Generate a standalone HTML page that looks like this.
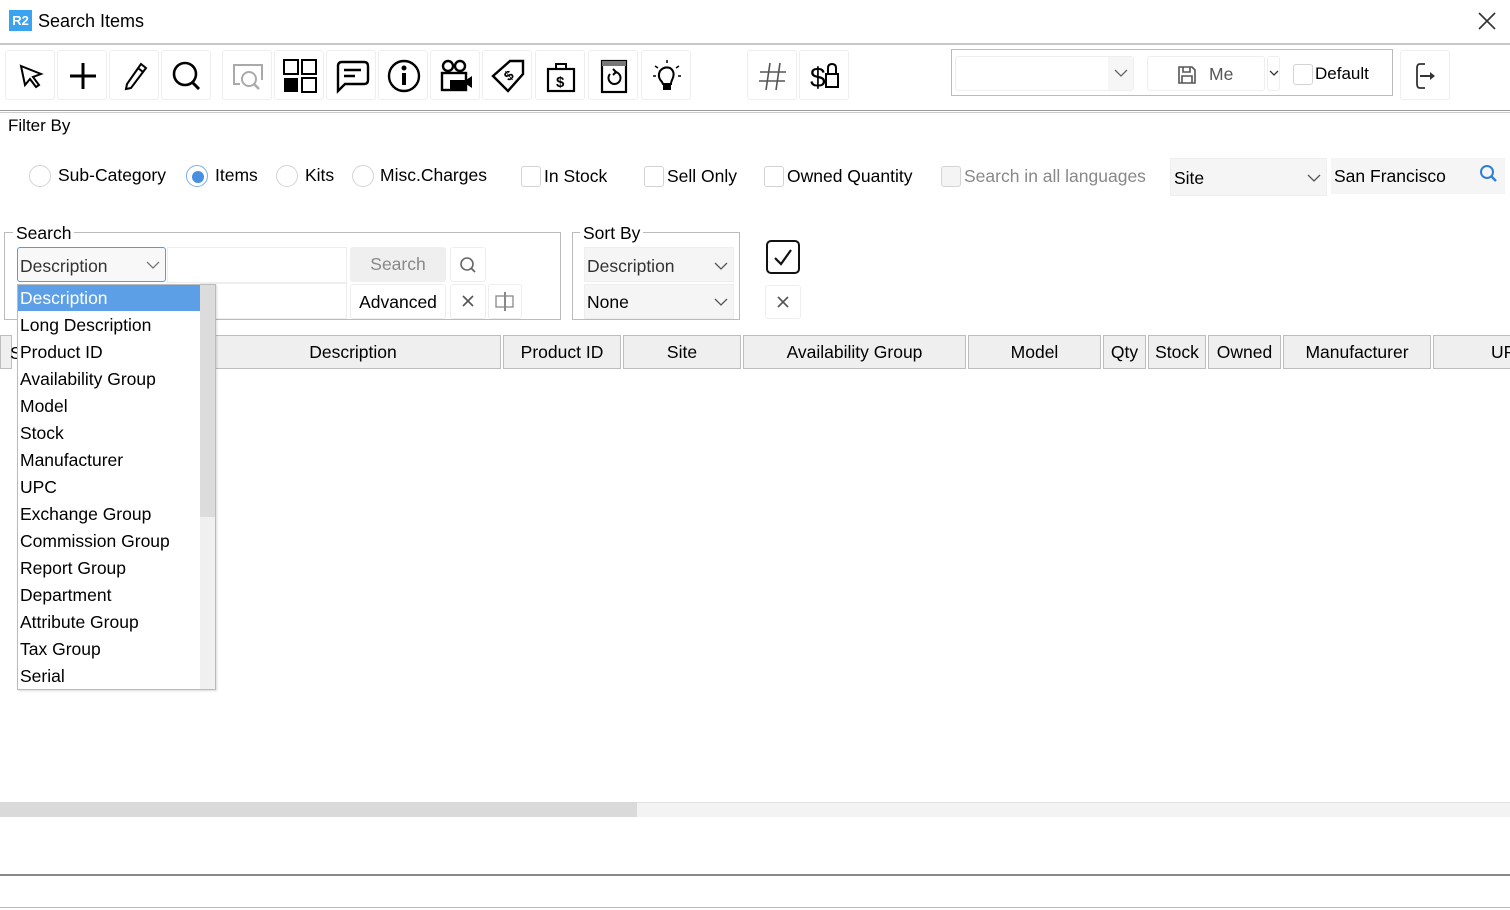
<!DOCTYPE html>
<html><head><meta charset="utf-8">
<style>
*{box-sizing:border-box;margin:0;padding:0}
body{width:1510px;height:910px;position:relative;background:#fff;font-family:"Liberation Sans",sans-serif;font-size:17.5px;color:#000;overflow:hidden}
.a{position:absolute}
.tb{position:absolute;top:50px;width:50px;height:50px;border:1px solid #eee;border-radius:3px;background:#fff}
.tb svg{position:absolute;left:7px;top:7px;width:36px;height:36px}
.rad{position:absolute;width:22px;height:22px;border:1.5px solid #d4d4d4;border-radius:50%;background:#fff}
.chk{position:absolute;width:20px;height:21px;border:1.5px solid #d4d4d4;border-radius:3px;background:#fff}
.hd{position:absolute;top:335px;height:34px;background:#efefef;border:1px solid #bdbdbd;text-align:center;line-height:33px}
.it{position:absolute;left:20px;height:27px;line-height:27px}
.btn{position:absolute;border:1px solid #eee;border-radius:3px;background:#fff}
</style></head><body>
<!-- title -->
<div class="a" style="left:9px;top:10px;width:23px;height:21px;background:#3aa3f0;color:#fff;font-size:13px;font-weight:bold;text-align:center;line-height:21px">R2</div>
<div class="a" style="left:38px;top:11px;font-size:18px">Search Items</div>
<svg class="a" style="left:1478px;top:12px" width="18" height="18"><path d="M1 1L17 17M17 1L1 17" stroke="#333" stroke-width="1.6"/></svg>
<div class="a" style="left:0;top:43px;width:1510px;height:2px;background:#c8c8c8"></div>
<!-- toolbar -->
<div class="tb" style="left:5px"><svg viewBox="0 0 36 36"><path d="M8 8L28 16L20 19L26 27L23 29L17 21L12 27Z" fill="none" stroke="#000" stroke-width="2"/></svg></div>
<div class="tb" style="left:57px"><svg viewBox="0 0 36 36"><path d="M18 5V31M5 18H31" stroke="#000" stroke-width="3"/></svg></div>
<div class="tb" style="left:109px"><svg viewBox="0 0 36 36"><path d="M24 6L29 10L14 30L9 31L10 26Z M21 10L26 14" fill="none" stroke="#000" stroke-width="2"/></svg></div>
<div class="tb" style="left:161px"><svg viewBox="0 0 36 36"><circle cx="16" cy="16" r="11" fill="none" stroke="#000" stroke-width="2.6"/><path d="M23 24L30 31" stroke="#000" stroke-width="3"/></svg></div>
<div class="tb" style="left:222px"><svg viewBox="0 0 36 36"><path d="M10 26H4V7H32V22" fill="none" stroke="#aaa" stroke-width="2"/><circle cx="19" cy="21" r="7" fill="#fff" stroke="#aaa" stroke-width="2"/><path d="M24 26L29 31" stroke="#aaa" stroke-width="2.5"/></svg></div>
<div class="tb" style="left:274px"><svg viewBox="0 0 36 36"><rect x="2" y="2" width="14" height="14" fill="none" stroke="#000" stroke-width="2"/><rect x="20" y="2" width="14" height="14" fill="none" stroke="#000" stroke-width="2"/><rect x="2" y="20" width="14" height="14" fill="#000"/><rect x="20" y="20" width="14" height="14" fill="none" stroke="#000" stroke-width="2"/></svg></div>
<div class="tb" style="left:326px"><svg viewBox="0 0 36 36"><path d="M4 8Q4 4 8 4H30Q34 4 34 8V22Q34 26 30 26H11L4 33Z" fill="none" stroke="#000" stroke-width="2.4"/><path d="M10 12H27M10 18H21" stroke="#000" stroke-width="2.4"/></svg></div>
<div class="tb" style="left:378px"><svg viewBox="0 0 36 36"><circle cx="18" cy="18" r="15" fill="none" stroke="#000" stroke-width="2.4"/><circle cx="18" cy="10" r="2.5"/><path d="M18 15V27" stroke="#000" stroke-width="4"/></svg></div>
<div class="tb" style="left:430px"><svg viewBox="0 0 36 36"><circle cx="10" cy="8" r="5" fill="none" stroke="#000" stroke-width="2.4"/><circle cx="22" cy="8" r="5" fill="none" stroke="#000" stroke-width="2.4"/><rect x="4" y="15" width="24" height="17" fill="none" stroke="#000" stroke-width="2.4"/><rect x="12" y="22" width="16" height="10"/><path d="M28 22L34 18V30L28 26" fill="#000"/></svg></div>
<div class="tb" style="left:482px"><svg viewBox="0 0 36 36"><path d="M3 18L20 3H33V16L18 33Z" fill="none" stroke="#000" stroke-width="2.4"/><text x="15" y="23" font-size="14" font-family="Liberation Sans" font-weight="bold" transform="rotate(-40 18 18)">$</text></svg></div>
<div class="tb" style="left:535px"><svg viewBox="0 0 36 36"><rect x="5" y="11" width="26" height="22" fill="none" stroke="#000" stroke-width="2.2"/><path d="M13 11V6H23V11" fill="none" stroke="#000" stroke-width="2"/><text x="13" y="29" font-size="15" font-family="Liberation Sans" font-weight="bold">$</text></svg></div>
<div class="tb" style="left:588px"><svg viewBox="0 0 36 36"><rect x="6" y="3" width="24" height="31" fill="none" stroke="#000" stroke-width="2.2"/><rect x="6" y="3" width="24" height="5" fill="#777"/><path d="M14 16A6 6 0 1 0 19 14" fill="none" stroke="#000" stroke-width="2"/><path d="M17 11L20 14L17 17" fill="none" stroke="#000" stroke-width="2"/></svg></div>
<div class="tb" style="left:641px"><svg viewBox="0 0 36 36"><path d="M13 24Q8 19 11 13Q15 8 21 10Q27 14 23 22Q22 24 22 26H14Z" fill="none" stroke="#000" stroke-width="2"/><rect x="14" y="27" width="8" height="5"/><path d="M18 2V5M6 8L9 10M30 8L27 10M4 18H7M29 18H32" stroke="#000" stroke-width="1.5"/></svg></div>
<div class="tb" style="left:747px"><svg viewBox="0 0 36 36"><path d="M15 5L11 32M25 5L21 32M5 14H31M4 23H30" stroke="#555" stroke-width="1.6"/></svg></div>
<div class="tb" style="left:799px"><svg viewBox="0 0 36 36"><text x="3" y="29" font-size="28" font-family="Liberation Sans">$</text><path d="M21 16V10Q21 6 25 6Q29 6 29 10V16" fill="none" stroke="#000" stroke-width="2"/><rect x="19" y="16" width="12" height="13" fill="#fff" stroke="#000" stroke-width="2"/></svg></div>
<!-- right toolbar group -->
<div class="a" style="left:951px;top:49px;width:442px;height:47px;border:1px solid #bbb"></div>
<div class="a" style="left:955px;top:56px;width:179px;height:35px;border:1px solid #eee;border-radius:3px;background:#fff"></div>
<div class="a" style="left:1108px;top:57px;width:25px;height:33px;background:#f6f6f6"></div>
<svg class="a" style="left:1114px;top:68px" width="14" height="10"><path d="M1 2L7 8L13 2" fill="none" stroke="#666" stroke-width="1.3"/></svg>
<div class="btn" style="left:1147px;top:56px;width:118px;height:35px"></div>
<svg class="a" style="left:1177px;top:65px" width="20" height="20"><path d="M2 2H15L18 5V18H2Z M6 2V7H13V2 M5 18V11H15V18" fill="none" stroke="#555" stroke-width="1.6"/></svg>
<div class="a" style="left:1209px;top:64px;color:#555">Me</div>
<div class="btn" style="left:1267px;top:56px;width:13px;height:35px"></div>
<svg class="a" style="left:1269px;top:70px" width="10" height="7"><path d="M1 1L5 5L9 1" fill="none" stroke="#333" stroke-width="1.3"/></svg>
<div class="chk" style="left:1293px;top:64px"></div>
<div class="a" style="left:1315px;top:64px;font-size:17px">Default</div>
<div class="tb" style="left:1400px"><svg viewBox="0 0 36 36"><path d="M17 6H12Q9 6 9 10V26Q9 30 12 30H17" fill="none" stroke="#333" stroke-width="1.8"/><path d="M12 18H24" stroke="#333" stroke-width="2"/><path d="M22 14L27 18L22 22Z" fill="#333"/></svg></div>
<div class="a" style="left:0;top:110px;width:1510px;height:1px;background:#999"></div>
<div class="a" style="left:0;top:112px;width:1510px;height:1px;background:#ccc"></div>
<div class="a" style="left:8px;top:116px;font-size:17px">Filter By</div>
<!-- filter row -->
<div class="rad" style="left:29px;top:165px"></div><div class="a" style="left:58px;top:165px">Sub-Category</div>
<div class="rad" style="left:186px;top:165px;border-color:#7ab0e8"></div><div class="a" style="left:192px;top:171px;width:12px;height:12px;border-radius:50%;background:#4a90e2"></div><div class="a" style="left:215px;top:165px">Items</div>
<div class="rad" style="left:276px;top:165px"></div><div class="a" style="left:305px;top:165px">Kits</div>
<div class="rad" style="left:352px;top:165px"></div><div class="a" style="left:380px;top:165px">Misc.Charges</div>
<div class="chk" style="left:521px;top:166px"></div><div class="a" style="left:544px;top:166px">In Stock</div>
<div class="chk" style="left:644px;top:166px"></div><div class="a" style="left:667px;top:166px">Sell Only</div>
<div class="chk" style="left:764px;top:166px"></div><div class="a" style="left:787px;top:166px">Owned Quantity</div>
<div class="chk" style="left:941px;top:166px;background:#f4f4f4"></div><div class="a" style="left:964px;top:166px;color:#888">Search in all languages</div>
<div class="a" style="left:1170px;top:158px;width:157px;height:38px;background:#f5f5f5;border:1px solid #eee"></div>
<div class="a" style="left:1174px;top:168px">Site</div>
<svg class="a" style="left:1307px;top:173px" width="14" height="10"><path d="M1 2L7 8L13 2" fill="none" stroke="#555" stroke-width="1.3"/></svg>
<div class="a" style="left:1331px;top:158px;width:174px;height:36px;background:#f5f5f5"></div>
<div class="a" style="left:1334px;top:166px">San Francisco</div>
<svg class="a" style="left:1479px;top:164px" width="20" height="20"><circle cx="8" cy="8" r="6" fill="none" stroke="#2f7fd8" stroke-width="2"/><path d="M12 12L17 17" stroke="#2f7fd8" stroke-width="2.4"/></svg>
<!-- search group -->
<div class="a" style="left:4px;top:232px;width:557px;height:88px;border:1px solid #bbb"></div>
<div class="a" style="left:13px;top:223px;background:#fff;padding:0 3px">Search</div>
<div class="a" style="left:17px;top:247px;width:149px;height:35px;border:1.5px solid #5b9bdc;border-radius:3px;background:#f8f8f8"></div>
<div class="a" style="left:20px;top:256px;color:#333">Description</div>
<svg class="a" style="left:146px;top:260px" width="14" height="10"><path d="M1 2L7 8L13 2" fill="none" stroke="#777" stroke-width="1.3"/></svg>
<div class="a" style="left:167px;top:247px;width:180px;height:36px;border:1px solid #eee"></div>
<div class="a" style="left:200px;top:283px;width:147px;height:36px;border:1px solid #eee"></div>
<div class="a" style="left:350px;top:247px;width:96px;height:35px;background:#efefef;border-radius:3px;text-align:center;line-height:35px;color:#888">Search</div>
<div class="btn" style="left:450px;top:247px;width:36px;height:35px"></div>
<svg class="a" style="left:459px;top:256px" width="20" height="20"><circle cx="8" cy="8" r="6" fill="none" stroke="#666" stroke-width="1.6"/><path d="M12 12L16 16" stroke="#666" stroke-width="1.8"/></svg>
<div class="btn" style="left:350px;top:284px;width:96px;height:35px;text-align:center;line-height:34px">Advanced</div>
<div class="btn" style="left:450px;top:284px;width:36px;height:35px"></div>
<svg class="a" style="left:462px;top:295px" width="12" height="12"><path d="M1 1L11 11M11 1L1 11" stroke="#555" stroke-width="1.6"/></svg>
<div class="btn" style="left:488px;top:284px;width:34px;height:35px"></div>
<svg class="a" style="left:494px;top:290px" width="22" height="22"><rect x="2" y="6" width="17" height="11" fill="none" stroke="#888" stroke-width="1.3"/><path d="M11 2V21" stroke="#888" stroke-width="2"/></svg>
<!-- sort group -->
<div class="a" style="left:572px;top:232px;width:168px;height:88px;border:1px solid #bbb"></div>
<div class="a" style="left:580px;top:223px;background:#fff;padding:0 3px">Sort By</div>
<div class="a" style="left:584px;top:247px;width:150px;height:35px;background:#f5f5f5;border:1px solid #eee"></div>
<div class="a" style="left:587px;top:256px;color:#333">Description</div>
<svg class="a" style="left:714px;top:261px" width="14" height="10"><path d="M1 2L7 8L13 2" fill="none" stroke="#555" stroke-width="1.3"/></svg>
<div class="a" style="left:584px;top:284px;width:150px;height:35px;background:#f5f5f5;border:1px solid #eee"></div>
<div class="a" style="left:587px;top:292px">None</div>
<svg class="a" style="left:714px;top:297px" width="14" height="10"><path d="M1 2L7 8L13 2" fill="none" stroke="#555" stroke-width="1.3"/></svg>
<div class="a" style="left:766px;top:240px;width:34px;height:34px;border:2.5px solid #111;border-radius:5px"></div>
<svg class="a" style="left:772px;top:246px" width="22" height="22"><path d="M3 12L9 18L19 4" fill="none" stroke="#111" stroke-width="2.2"/></svg>
<div class="btn" style="left:765px;top:285px;width:36px;height:34px"></div>
<svg class="a" style="left:777px;top:296px" width="12" height="12"><path d="M1 1L11 11M11 1L1 11" stroke="#555" stroke-width="1.6"/></svg>
<!-- header -->
<div class="hd" style="left:0;width:10px;text-align:left;padding-left:10px"></div>
<div class="a" style="left:10px;top:343px">S</div>
<div class="hd" style="left:205px;width:296px">Description</div>
<div class="hd" style="left:503px;width:118px">Product ID</div>
<div class="hd" style="left:623px;width:118px">Site</div>
<div class="hd" style="left:743px;width:223px">Availability Group</div>
<div class="hd" style="left:968px;width:133px">Model</div>
<div class="hd" style="left:1103px;width:43px">Qty</div>
<div class="hd" style="left:1148px;width:58px">Stock</div>
<div class="hd" style="left:1208px;width:73px">Owned</div>
<div class="hd" style="left:1283px;width:148px">Manufacturer</div>
<div class="hd" style="left:1433px;width:100px;text-align:left;padding-left:57px">UP</div>
<!-- scrollbar bottom -->
<div class="a" style="left:0;top:802px;width:1510px;height:15px;background:#f3f3f3;border-top:1px solid #e4e4e4"></div>
<div class="a" style="left:0;top:802px;width:637px;height:15px;background:#dadada"></div>
<div class="a" style="left:0;top:874px;width:1510px;height:2px;background:#888"></div>
<div class="a" style="left:0;top:907px;width:1510px;height:1px;background:#bbb"></div>
<!-- dropdown -->
<div class="a" style="left:17px;top:284px;width:199px;height:406px;background:#fff;border:1px solid #bbb;box-shadow:1px 1px 2px rgba(0,0,0,.15)"></div>
<div class="a" style="left:200px;top:285px;width:15px;height:404px;background:#f0f0f0"></div>
<div class="a" style="left:200px;top:285px;width:15px;height:232px;background:#dcdcdc"></div>
<div class="a" style="left:18px;top:285px;width:182px;height:26px;background:#5c9fe6"></div>
<div class="it" style="top:285px;color:#fff">Description</div>
<div class="it" style="top:312px">Long Description</div>
<div class="it" style="top:339px">Product ID</div>
<div class="it" style="top:366px">Availability Group</div>
<div class="it" style="top:393px">Model</div>
<div class="it" style="top:420px">Stock</div>
<div class="it" style="top:447px">Manufacturer</div>
<div class="it" style="top:474px">UPC</div>
<div class="it" style="top:501px">Exchange Group</div>
<div class="it" style="top:528px">Commission Group</div>
<div class="it" style="top:555px">Report Group</div>
<div class="it" style="top:582px">Department</div>
<div class="it" style="top:609px">Attribute Group</div>
<div class="it" style="top:636px">Tax Group</div>
<div class="it" style="top:663px">Serial</div>
</body></html>
